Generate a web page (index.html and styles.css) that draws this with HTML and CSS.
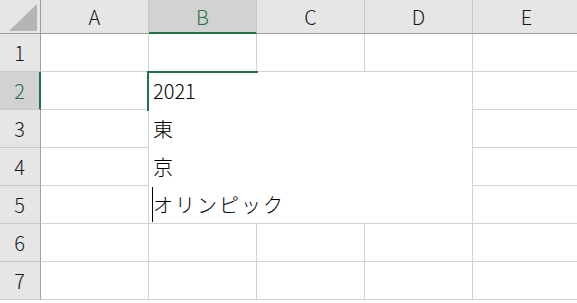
FILE: index.html
```html
<!DOCTYPE html>
<html lang="ja">
<head>
<meta charset="utf-8">
<link rel="stylesheet" href="styles.css">
</head>
<body>
<div class="sheet">
  <div class="grid">
    <div class="corner"><svg class="tri" width="41" height="34" viewBox="0 0 41 34"><polygon points="37,4 37,31 9,31" fill="#b5b5b5"/></svg></div>
    <div class="ch">A</div><div class="ch sel">B</div><div class="ch">C</div><div class="ch">D</div><div class="ch">E</div>

    <div class="rh">1</div><div class="c"></div><div class="c"></div><div class="c"></div><div class="c"></div><div class="c"></div>
    <div class="rh sel">2</div><div class="c"></div><div class="c"></div><div class="c"></div><div class="c"></div><div class="c"></div>
    <div class="rh">3</div><div class="c"></div><div class="c"></div><div class="c"></div><div class="c"></div><div class="c"></div>
    <div class="rh">4</div><div class="c"></div><div class="c"></div><div class="c"></div><div class="c"></div><div class="c"></div>
    <div class="rh">5</div><div class="c"></div><div class="c"></div><div class="c"></div><div class="c"></div><div class="c"></div>
    <div class="rh">6</div><div class="c"></div><div class="c"></div><div class="c"></div><div class="c"></div><div class="c"></div>
    <div class="rh">7</div><div class="c"></div><div class="c"></div><div class="c"></div><div class="c"></div><div class="c"></div>
  </div>

  <div class="editor">
    <div class="line">2021</div>
    <div class="line">東</div>
    <div class="line">京</div>
    <div class="line caretline"><span class="caret"></span><span class="kana">オリンピック</span></div>
  </div>
  <div class="active"></div>
</div>
</body>
</html>
```
FILE: styles.css
```css
html, body {
  margin: 0;
  padding: 0;
  background: #ffffff;
  overflow: hidden;
}

.sheet {
  position: relative;
  width: 577px;
  height: 303px;
  overflow: hidden;
  font-family: "Noto Sans CJK JP", "Noto Sans", sans-serif;
}

.grid {
  display: grid;
  grid-template-columns: 41px repeat(5, 108px);
  grid-template-rows: 34px repeat(7, 38px);
}

.corner {
  background: #e6e6e6;
  border-right: 1px solid #9f9f9f;
  border-bottom: 1px solid #9f9f9f;
  box-sizing: border-box;
  position: relative;
}

.tri {
  display: block;
}

.ch, .rh {
  box-sizing: border-box;
  background: #e6e6e6;
  color: #1a1a1a;
  font-size: 20px;
  font-weight: 300;
  display: flex;
  align-items: center;
  justify-content: center;
}

.ch {
  border-right: 1px solid #c8c8c8;
  border-bottom: 1px solid #9f9f9f;
  padding-top: 0;
}

.rh {
  border-right: 1px solid #9f9f9f;
  border-bottom: 1px solid #c8c8c8;
  padding-right: 1px;
}

.ch.sel {
  background: #d2d2d2;
  color: #217346;
  border-bottom: 2px solid #217346;
  padding-top: 1px;
}

.rh.sel {
  background: #d2d2d2;
  color: #217346;
  border-right: 2px solid #217346;
  padding-right: 0;
}

.c {
  box-sizing: border-box;
  border-right: 1px solid #d4d4d4;
  border-bottom: 1px solid #d4d4d4;
  background: #ffffff;
}

.editor {
  position: absolute;
  left: 149px;
  top: 72px;
  width: 323px;
  height: 151px;
  background: #ffffff;
  overflow: hidden;
  font-size: 20px;
  font-weight: 300;
  color: #000000;
}

.line {
  position: relative;
  height: 38px;
  line-height: 37px;
  padding-left: 4px;
  white-space: nowrap;
}

.kana {
  letter-spacing: 2px;
}

.caret {
  position: absolute;
  left: 3px;
  top: 1px;
  width: 1px;
  height: 35px;
  background: #000000;
}

.active {
  position: absolute;
  left: 147px;
  top: 71px;
  width: 111px;
  height: 40px;
  box-sizing: border-box;
  border-top: 2px solid #217346;
  border-left: 2px solid #217346;
}
```
